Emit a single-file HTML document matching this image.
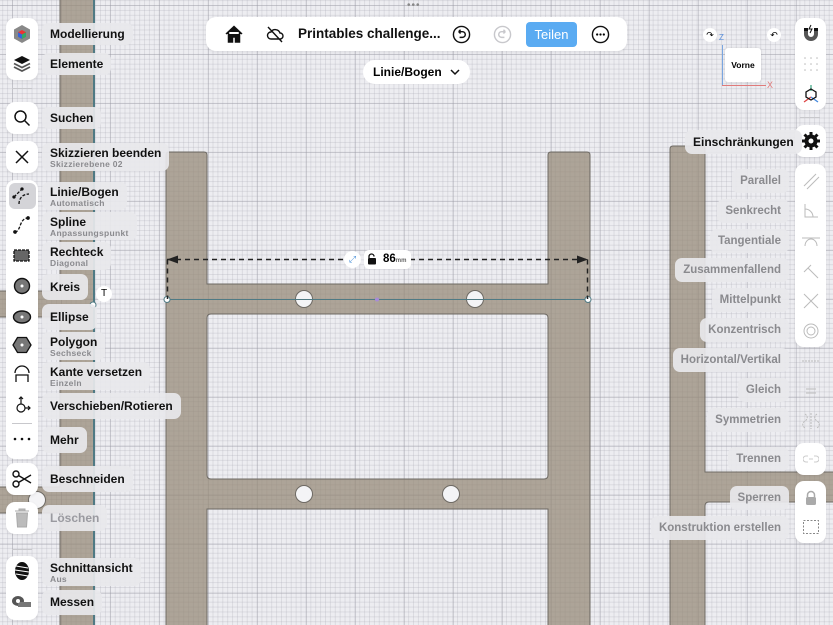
<!DOCTYPE html>
<html><head><meta charset="utf-8"><style>
*{margin:0;padding:0;box-sizing:border-box}
html,body{width:833px;height:625px;overflow:hidden}
body{position:relative;font-family:"Liberation Sans",sans-serif;
background-color:#ededf1;
background-image:
linear-gradient(90deg,rgba(150,150,160,.35) 1px,transparent 1px),
linear-gradient(0deg,rgba(150,150,160,.35) 1px,transparent 1px),
linear-gradient(90deg,rgba(170,170,180,.28) 1px,transparent 1px),
linear-gradient(0deg,rgba(170,170,180,.28) 1px,transparent 1px);
background-size:49px 49px,49px 49px,4.9px 4.9px,4.9px 4.9px;
background-position:12px 6px,12px 6px,12px 6px,12px 6px}
.abs{position:absolute}
.panel{position:absolute;background:#fff;border-radius:9px;box-shadow:0 1px 3px rgba(0,0,0,.08)}
.lbl{position:absolute;background:rgba(232,232,236,.92);border-radius:7px;font-weight:bold;font-size:12px;color:#111;padding:0 8px;white-space:nowrap;line-height:14px}
.lbl small{display:block;font-size:8.5px;color:#8a8a8e;font-weight:bold;line-height:9px;letter-spacing:.3px}
.r{color:#8a8a8e;font-weight:bold;font-size:11.5px}
.ric{position:absolute;left:795px;width:31px;height:30px;display:flex;align-items:center;justify-content:center}
.sep{position:absolute;height:1px;background:#c8c8cc;width:20px}
</style></head><body>

<svg class="abs" style="left:0;top:0" width="833" height="625">
<g fill="rgba(150,138,120,.74)" stroke="#6e6a64" stroke-width="1">
<path d="M60 -2V291H-2V317H60V487H-2V513H60V630H94V-2Z"/>
<path d="M169 152H204Q207 152 207 155V284H548V155Q548 152 551 152H587Q590 152 590 155V630H548V509H207V630H166V155Q166 152 169 152ZM211 314Q207 314 207 318V475Q207 479 211 479H544Q548 479 548 475V318Q548 314 544 314Z" fill-rule="evenodd"/>
<path d="M673 146H702Q705 146 705 149V472H840V502H709Q705 502 705 506V630H670V149Q670 146 673 146Z"/>
</g>
<g fill="#f4f4f6" stroke="#6e6a64">
<circle cx="37" cy="500" r="8.5"/>
<circle cx="304" cy="299" r="8.5"/><circle cx="475" cy="299" r="8.5"/>
<circle cx="304" cy="494" r="8.5"/><circle cx="451" cy="494" r="8.5"/>
</g>
<line x1="94" y1="0" x2="94" y2="625" stroke="#4f7a84" stroke-width="2"/>
<line x1="167" y1="299.5" x2="588" y2="299.5" stroke="#4f7a84"/>
<circle cx="167" cy="299.5" r="3" fill="#fff" stroke="#4f7a84"/>
<circle cx="588" cy="299.5" r="3" fill="#fff" stroke="#4f7a84"/>
<circle cx="93" cy="305" r="3" fill="#fff" stroke="#4f7a84"/>
<circle cx="377" cy="299.5" r="2" fill="#a78bd8"/>
<g stroke="#222" stroke-width="1.5" stroke-dasharray="5 4" fill="none">
<path d="M167 259.5H588M167.5 259.5V299M587.5 259.5V299"/>
</g>
<path d="M167 259.5l11-4v8z M588 259.5l-11-4v8z" fill="#222"/>
</svg>

<div class="abs" style="left:344px;top:251px;width:17px;height:17px;border-radius:50%;background:#fff;font-size:9px;color:#4a90d9;text-align:center;line-height:17px">⤢</div>
<div class="abs" style="left:364px;top:250px;width:47px;height:19px;border-radius:5px;background:#fff;font-size:11.5px;font-weight:bold;line-height:19px;padding-left:19px">86<span style="font-size:6px;color:#666">mm</span></div>
<svg class="abs" style="left:367px;top:253px" width="10" height="12"><path d="M2 5V3.5a2.5 2.5 0 0 1 5 0" fill="none" stroke="#111" stroke-width="1.3"/><rect x="1" y="5" width="8" height="6.5" rx="1" fill="#111"/></svg>
<div class="abs" style="left:96px;top:286px;width:16px;height:16px;border-radius:50%;background:#fff;font-size:10px;text-align:center;line-height:16px">T</div>

<div class="abs" style="left:407px;top:2px;font-size:10px;color:#888;letter-spacing:1px;line-height:8px">•••</div>
<div class="panel" style="left:206px;top:17px;width:421px;height:34px;border-radius:10px"></div>
<svg class="abs" style="left:224px;top:24px" width="20" height="20" viewBox="0 0 20 20"><path d="M2 10L10 2.5 18 10M4.5 8v10h4v-5h3v5h4V8" fill="#111" stroke="#111" stroke-width="1.5"/></svg>
<svg class="abs" style="left:265px;top:24px" width="20" height="20" viewBox="0 0 20 20" fill="none" stroke="#111" stroke-width="1.4"><path d="M6 15h9a3 3 0 0 0 0-6 5 5 0 0 0-9-1 3.5 3.5 0 0 0 0 7zM3 3l14 15"/></svg>
<div class="abs" style="left:298px;top:26px;font-size:13.5px;font-weight:bold;color:#111">Printables challenge...</div>
<svg class="abs" style="left:452px;top:25px" width="19" height="19" viewBox="0 0 20 20" fill="none" stroke="#111" stroke-width="1.5"><circle cx="10" cy="10" r="8.5"/><path d="M7 7h4a3 3 0 0 1 0 6H8M7 7l2-2M7 7l2 2"/></svg>
<svg class="abs" style="left:493px;top:25px" width="19" height="19" viewBox="0 0 20 20" fill="none" stroke="#c8c8cc" stroke-width="1.5"><circle cx="10" cy="10" r="8.5"/><path d="M13 7H9a3 3 0 0 0 0 6h3M13 7l-2-2M13 7l-2 2"/></svg>
<div class="abs" style="left:526px;top:22px;width:51px;height:25px;background:#5aabf2;border-radius:4px;color:#fff;font-size:13px;text-align:center;line-height:25px">Teilen</div>
<svg class="abs" style="left:591px;top:25px" width="19" height="19" viewBox="0 0 20 20"><circle cx="10" cy="10" r="8.5" fill="none" stroke="#111" stroke-width="1.5"/><circle cx="6.5" cy="10" r="1.2"/><circle cx="10" cy="10" r="1.2"/><circle cx="13.5" cy="10" r="1.2"/></svg>
<div class="abs" style="left:363px;top:60px;width:107px;height:24px;background:#fff;border-radius:12px;font-size:12px;font-weight:bold;line-height:24px;padding-left:10px">Linie/Bogen</div>
<svg class="abs" style="left:450px;top:69px" width="10" height="7" fill="none" stroke="#111" stroke-width="1.5"><path d="M1 1l4 4 4-4"/></svg>

<div class="abs" style="left:703px;top:28px;width:14px;height:14px;border-radius:50%;background:#fff;font-size:9px;text-align:center;line-height:14px">↷</div>
<div class="abs" style="left:767px;top:28px;width:14px;height:14px;border-radius:50%;background:#fff;font-size:9px;text-align:center;line-height:14px">↶</div>
<div class="abs" style="left:722px;top:45px;width:1px;height:41px;background:#7aa6e0"></div>
<div class="abs" style="left:722px;top:85px;width:44px;height:1px;background:#e07a7a"></div>
<div class="abs" style="left:719px;top:33px;font-size:8px;color:#5a8fdb">Z</div>
<div class="abs" style="left:767px;top:80px;font-size:9px;color:#e07a7a">X</div>
<div class="abs" style="left:725px;top:48px;width:36px;height:34px;background:#fff;border-radius:3px;font-size:8.5px;font-weight:bold;text-align:center;line-height:34px;box-shadow:0 0 2px rgba(0,0,0,.15)">Vorne</div>

<div class="panel" style="left:6px;top:18px;width:32px;height:62px"></div>
<div class="sep" style="left:12px;top:88px"></div>
<div class="panel" style="left:6px;top:102px;width:32px;height:32px"></div>
<div class="panel" style="left:6px;top:141px;width:32px;height:32px"></div>
<div class="panel" style="left:6px;top:180px;width:32px;height:279px"></div>
<div class="abs" style="left:9px;top:183px;width:27px;height:26px;background:#d4d4d8;border-radius:6px"></div>
<div class="sep" style="left:12px;top:423px"></div>
<div class="panel" style="left:6px;top:463px;width:32px;height:32px"></div>
<div class="panel" style="left:6px;top:502px;width:32px;height:32px"></div>
<div class="sep" style="left:12px;top:549px"></div>
<div class="panel" style="left:6px;top:556px;width:32px;height:64px"></div>

<svg class="abs" style="left:13px;top:24px" width="18" height="20"><path d="M9 1l8 4.5v9L9 19 1 14.5v-9z" fill="#888"/><path d="M9 6l4 2.2v4.6L9 15 5 12.8V8.2z" fill="#e33"/><path d="M9 10.5l4-2.3v4.6L9 15z" fill="#3a6"/><path d="M5 8.2L9 10.5V15L5 12.8z" fill="#36d"/></svg>
<svg class="abs" style="left:13px;top:55px" width="18" height="18"><path d="M9 1l8 4-8 4-8-4z" fill="#111"/><path d="M1 8.5l8 4 8-4M1 12l8 4 8-4" fill="none" stroke="#555" stroke-width="1.8"/></svg>
<svg class="abs" style="left:13px;top:109px" width="18" height="18" fill="none" stroke="#111" stroke-width="1.5"><circle cx="7.5" cy="7.5" r="5.5"/><path d="M11.5 11.5l5 5"/></svg>
<svg class="abs" style="left:14px;top:149px" width="16" height="16" stroke="#111" stroke-width="1.5"><path d="M2 2l12 12M14 2L2 14"/></svg>
<svg class="abs" style="left:12px;top:186px" width="22" height="20" fill="none" stroke="#111" stroke-width="1.3"><path d="M2 11L10 3M7 18c0-6 4-10 10-10" stroke-dasharray="3 1.5"/><circle cx="2" cy="11" r="1" fill="#111"/><circle cx="10" cy="3" r="1" fill="#111"/></svg>
<svg class="abs" style="left:12px;top:215px" width="20" height="20" fill="none" stroke="#111" stroke-width="1.3"><path d="M3 17c6 0 4-14 13-14" stroke-dasharray="3 1.5"/><circle cx="3" cy="17" r="1.2" fill="#111"/><circle cx="16" cy="3" r="1.2" fill="#111"/></svg>
<svg class="abs" style="left:12px;top:247px" width="20" height="18"><rect x="2" y="3" width="15" height="11" fill="#666" stroke="#111" stroke-width="1.3" stroke-dasharray="3 1"/></svg>
<svg class="abs" style="left:12px;top:276px" width="20" height="20"><circle cx="10" cy="10" r="7.5" fill="#777" stroke="#111" stroke-width="1.4"/><circle cx="10" cy="10" r="1.5" fill="#fff"/></svg>
<svg class="abs" style="left:12px;top:307px" width="20" height="20"><ellipse cx="10" cy="10" rx="8.5" ry="6" fill="#777" stroke="#111" stroke-width="1.4"/><circle cx="10" cy="10" r="1.5" fill="#fff"/></svg>
<svg class="abs" style="left:12px;top:335px" width="20" height="20"><path d="M5.5 2.5h9L19 10l-4.5 7.5h-9L1 10z" fill="#777" stroke="#111" stroke-width="1.3"/><circle cx="10" cy="10" r="1.5" fill="#fff"/></svg>
<svg class="abs" style="left:12px;top:364px" width="20" height="20" fill="none" stroke="#111" stroke-width="1.3"><path d="M4 18v-7h12v7M3 9a7 7 0 0 1 14 0"/></svg>
<svg class="abs" style="left:12px;top:395px" width="20" height="20" fill="none" stroke="#111" stroke-width="1.2"><circle cx="9" cy="13" r="4"/><path d="M9 9V2M7 4l2-2 2 2M13 13h5M16 11l2 2-2 2"/></svg>
<svg class="abs" style="left:12px;top:436px" width="20" height="6" fill="#111"><circle cx="3" cy="3" r="1.3"/><circle cx="10" cy="3" r="1.3"/><circle cx="17" cy="3" r="1.3"/></svg>
<svg class="abs" style="left:12px;top:470px" width="20" height="18" fill="none" stroke="#111" stroke-width="1.4"><circle cx="4" cy="4" r="3"/><circle cx="4" cy="14" r="3"/><path d="M6.5 5.5L19 13M6.5 12.5L19 5"/></svg>
<svg class="abs" style="left:14px;top:508px" width="16" height="20"><path d="M1 3h14M5 3V1h6v2M2.5 5h11l-1 14h-9z" fill="#bbb" stroke="#aaa"/></svg>
<svg class="abs" style="left:13px;top:561px" width="18" height="20"><ellipse cx="9" cy="10" rx="7" ry="9" fill="#111"/><path d="M3 5l12 2M2 9l14 2M3 13l12 2" stroke="#fff" stroke-width="1"/></svg>
<svg class="abs" style="left:11px;top:593px" width="22" height="18"><ellipse cx="7" cy="8" rx="6" ry="5" fill="#555"/><rect x="7" y="9" width="13" height="5" fill="#777"/><circle cx="7" cy="8" r="2" fill="#fff"/></svg>

<div class="lbl" style="left:42px;top:23px;height:22px;line-height:22px">Modellierung</div>
<div class="lbl" style="left:42px;top:53px;height:22px;line-height:22px">Elemente</div>
<div class="lbl" style="left:42px;top:107px;height:22px;line-height:22px">Suchen</div>
<div class="lbl" style="left:42px;top:143px;height:28px;padding-top:3px">Skizzieren beenden<small>Skizzierebene 02</small></div>
<div class="lbl" style="left:42px;top:182px;height:28px;padding-top:3px">Linie/Bogen<small>Automatisch</small></div>
<div class="lbl" style="left:42px;top:212px;height:28px;padding-top:3px">Spline<small>Anpassungspunkt</small></div>
<div class="lbl" style="left:42px;top:242px;height:28px;padding-top:3px">Rechteck<small>Diagonal</small></div>
<div class="lbl" style="left:42px;top:274px;height:26px;line-height:26px">Kreis</div>
<div class="lbl" style="left:42px;top:304px;height:26px;line-height:26px">Ellipse</div>
<div class="lbl" style="left:42px;top:332px;height:28px;padding-top:3px">Polygon<small>Sechseck</small></div>
<div class="lbl" style="left:42px;top:362px;height:28px;padding-top:3px">Kante versetzen<small>Einzeln</small></div>
<div class="lbl" style="left:42px;top:393px;height:26px;line-height:26px">Verschieben/Rotieren</div>
<div class="lbl" style="left:42px;top:427px;height:26px;line-height:26px">Mehr</div>
<div class="lbl" style="left:42px;top:466px;height:26px;line-height:26px">Beschneiden</div>
<div class="lbl" style="left:42px;top:505px;height:26px;line-height:26px;color:#9a9aa0">Löschen</div>
<div class="lbl" style="left:42px;top:558px;height:28px;padding-top:3px">Schnittansicht<small>Aus</small></div>
<div class="lbl" style="left:42px;top:590px;height:25px;line-height:25px">Messen</div>

<div class="panel" style="left:795px;top:18px;width:31px;height:92px"></div>
<div class="sep" style="left:800px;top:117px"></div>
<div class="panel" style="left:795px;top:125px;width:31px;height:32px"></div>
<div class="panel" style="left:795px;top:164px;width:31px;height:183px"></div>
<div class="panel" style="left:795px;top:443px;width:31px;height:32px"></div>
<div class="panel" style="left:795px;top:481px;width:31px;height:62px"></div>

<svg class="abs" style="left:802px;top:24px" width="18" height="20"><path d="M2 4v6a7 7 0 0 0 14 0V4h-4v6a3 3 0 0 1-6 0V4z" fill="#555"/><rect x="2" y="4" width="4" height="3" fill="#111"/><rect x="12" y="4" width="4" height="3" fill="#111"/><path d="M9 1l-2 4h3l-2 4" stroke="#111" fill="none"/></svg>
<svg class="abs" style="left:802px;top:55px" width="18" height="18" fill="#bbb"><circle cx="3" cy="3" r=".8"/><circle cx="9" cy="3" r=".8"/><circle cx="15" cy="3" r=".8"/><circle cx="3" cy="9" r=".8"/><circle cx="9" cy="9" r=".8"/><circle cx="15" cy="9" r=".8"/><circle cx="3" cy="15" r=".8"/><circle cx="9" cy="15" r=".8"/><circle cx="15" cy="15" r=".8"/></svg>
<svg class="abs" style="left:802px;top:84px" width="18" height="20" fill="none" stroke-width="1.3"><path d="M9 1v6" stroke="#4a8"/><path d="M9 13l-7 5" stroke="#d44"/><path d="M9 13l7 5" stroke="#48d"/><path d="M9 5l5 3v5l-5 3-5-3V8z" stroke="#111"/></svg>
<svg class="abs" style="left:802px;top:132px" width="18" height="18"><circle cx="9" cy="9" r="6.5" fill="#111"/><circle cx="9" cy="9" r="2.5" fill="#fff"/><g stroke="#111" stroke-width="3"><path d="M9 0v4M9 14v4M0 9h4M14 9h4M2.5 2.5l3 3M12.5 12.5l3 3M2.5 15.5l3-3M12.5 5.5l3-3"/></g></svg>
<div class="ric" style="top:166px"><svg width="18" height="18" stroke="#bbb" stroke-width="1"><path d="M2 14L14 2M5 17L17 5"/></svg></div>
<div class="ric" style="top:196px"><svg width="18" height="18" stroke="#bbb" fill="none"><path d="M3 2v13h13M3 7a8 8 0 0 1 8 8"/></svg></div>
<div class="ric" style="top:226px"><svg width="20" height="18" stroke="#bbb" fill="none"><path d="M1 6h18M4 14a6 7 0 0 1 12 0"/></svg></div>
<div class="ric" style="top:256px"><svg width="18" height="18" stroke="#bbb" fill="none"><path d="M2 10L9 3M6 6l10 10"/></svg></div>
<div class="ric" style="top:286px"><svg width="18" height="18" stroke="#bbb" fill="none"><path d="M2 2l14 14M16 2L2 16"/></svg></div>
<div class="ric" style="top:316px"><svg width="18" height="18" stroke="#bbb" fill="none"><circle cx="9" cy="9" r="7"/><circle cx="9" cy="9" r="4"/></svg></div>
<div class="ric" style="top:346px"><svg width="20" height="6" stroke="#bbb"><path d="M1 3h18" stroke-dasharray="2 1"/></svg></div>
<div class="ric" style="top:376px"><svg width="14" height="10" stroke="#bbb"><path d="M2 3h10M2 7h10"/></svg></div>
<div class="ric" style="top:406px"><svg width="18" height="18" stroke="#bbb" fill="none"><path d="M3 2c3 2 3 5 0 7s-3 5 0 7M15 2c-3 2-3 5 0 7s3 5 0 7M9 1v16" stroke-dasharray="2 1"/></svg></div>
<div class="ric" style="top:444px"><svg width="16" height="10" stroke="#ccc" fill="none"><path d="M5 2H3a3 3 0 0 0 0 6h2M11 2h2a3 3 0 0 1 0 6h-2M6 5h4"/></svg></div>
<div class="ric" style="top:483px"><svg width="14" height="16"><path d="M3.5 7V5a3.5 3.5 0 0 1 7 0v2" fill="none" stroke="#aaa" stroke-width="1.5"/><rect x="2" y="7" width="10" height="8" rx="1.5" fill="#aaa"/></svg></div>
<div class="ric" style="top:512px"><svg width="18" height="16"><rect x="1.5" y="1.5" width="15" height="13" fill="none" stroke="#888" stroke-dasharray="2 1.5"/></svg></div>

<div class="lbl" style="left:685px;top:130px;height:24px;line-height:24px;font-size:12px">Einschränkungen</div>
<div class="lbl r" style="right:44px;top:169px;height:24px;line-height:24px">Parallel</div>
<div class="lbl r" style="right:44px;top:199px;height:24px;line-height:24px">Senkrecht</div>
<div class="lbl r" style="right:44px;top:229px;height:24px;line-height:24px">Tangentiale</div>
<div class="lbl r" style="right:44px;top:258px;height:24px;line-height:24px">Zusammenfallend</div>
<div class="lbl r" style="right:44px;top:288px;height:24px;line-height:24px">Mittelpunkt</div>
<div class="lbl r" style="right:44px;top:318px;height:24px;line-height:24px">Konzentrisch</div>
<div class="lbl r" style="right:44px;top:348px;height:24px;line-height:24px">Horizontal/Vertikal</div>
<div class="lbl r" style="right:44px;top:378px;height:24px;line-height:24px">Gleich</div>
<div class="lbl r" style="right:44px;top:408px;height:24px;line-height:24px">Symmetrien</div>
<div class="lbl r" style="right:44px;top:447px;height:24px;line-height:24px">Trennen</div>
<div class="lbl r" style="right:44px;top:486px;height:24px;line-height:24px">Sperren</div>
<div class="lbl r" style="right:44px;top:516px;height:24px;line-height:24px">Konstruktion erstellen</div>
</body></html>
